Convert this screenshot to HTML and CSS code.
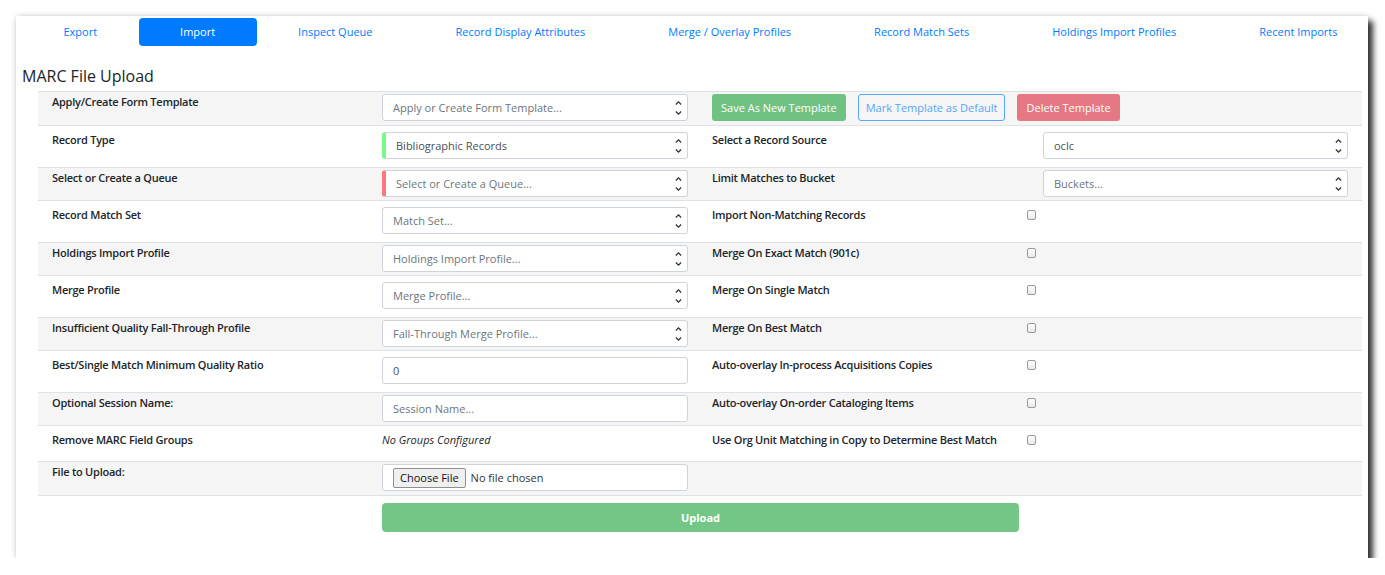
FILE: index.html
```html
<!DOCTYPE html>
<html lang="en">
<head>
  <meta charset="UTF-8">
  <title>MARC File Upload</title>
  <link rel="stylesheet" href="styles.css">
</head>
<body>
  <div class="panel">
    <ul class="tabs">
      <li><a href="#">Export</a></li>
      <li><a href="#" class="active">Import</a></li>
      <li><a href="#">Inspect Queue</a></li>
      <li><a href="#">Record Display Attributes</a></li>
      <li><a href="#">Merge / Overlay Profiles</a></li>
      <li><a href="#">Record Match Sets</a></li>
      <li><a href="#">Holdings Import Profiles</a></li>
      <li><a href="#">Recent Imports</a></li>
    </ul>

    <h3 class="title">MARC File Upload</h3>

    <div class="form-table">
      <div class="row shaded first">
        <div class="cell label">Apply/Create Form Template</div>
        <div class="cell"><div class="select placeholder"><span>Apply or Create Form Template...</span><svg class="caret" viewBox="0 0 8 18"><polyline points="1,5 4,2 7,5"/><polyline points="1,13 4,16 7,13"/></svg></div></div>
        <div class="cell span-2 btn-group">
          <button class="btn btn-success">Save As New Template</button>
          <button class="btn btn-outline">Mark Template as Default</button>
          <button class="btn btn-danger">Delete Template</button>
        </div>
      </div>

      <div class="row">
        <div class="cell label">Record Type</div>
        <div class="cell"><div class="select valid"><span>Bibliographic Records</span><svg class="caret" viewBox="0 0 8 18"><polyline points="1,5 4,2 7,5"/><polyline points="1,13 4,16 7,13"/></svg></div></div>
        <div class="cell label">Select a Record Source</div>
        <div class="cell right"><div class="select"><span>oclc</span><svg class="caret" viewBox="0 0 8 18"><polyline points="1,5 4,2 7,5"/><polyline points="1,13 4,16 7,13"/></svg></div></div>
      </div>

      <div class="row shaded">
        <div class="cell label">Select or Create a Queue</div>
        <div class="cell"><div class="select placeholder invalid"><span>Select or Create a Queue...</span><svg class="caret" viewBox="0 0 8 18"><polyline points="1,5 4,2 7,5"/><polyline points="1,13 4,16 7,13"/></svg></div></div>
        <div class="cell label">Limit Matches to Bucket</div>
        <div class="cell right"><div class="select placeholder"><span>Buckets...</span><svg class="caret" viewBox="0 0 8 18"><polyline points="1,5 4,2 7,5"/><polyline points="1,13 4,16 7,13"/></svg></div></div>
      </div>

      <div class="row">
        <div class="cell label">Record Match Set</div>
        <div class="cell"><div class="select placeholder"><span>Match Set...</span><svg class="caret" viewBox="0 0 8 18"><polyline points="1,5 4,2 7,5"/><polyline points="1,13 4,16 7,13"/></svg></div></div>
        <div class="cell label">Import Non-Matching Records</div>
        <div class="cell right"><span class="checkbox"></span></div>
      </div>

      <div class="row shaded">
        <div class="cell label">Holdings Import Profile</div>
        <div class="cell"><div class="select placeholder"><span>Holdings Import Profile...</span><svg class="caret" viewBox="0 0 8 18"><polyline points="1,5 4,2 7,5"/><polyline points="1,13 4,16 7,13"/></svg></div></div>
        <div class="cell label">Merge On Exact Match (901c)</div>
        <div class="cell right"><span class="checkbox"></span></div>
      </div>

      <div class="row">
        <div class="cell label">Merge Profile</div>
        <div class="cell"><div class="select placeholder"><span>Merge Profile...</span><svg class="caret" viewBox="0 0 8 18"><polyline points="1,5 4,2 7,5"/><polyline points="1,13 4,16 7,13"/></svg></div></div>
        <div class="cell label">Merge On Single Match</div>
        <div class="cell right"><span class="checkbox"></span></div>
      </div>

      <div class="row shaded">
        <div class="cell label">Insufficient Quality Fall-Through Profile</div>
        <div class="cell"><div class="select placeholder"><span>Fall-Through Merge Profile...</span><svg class="caret" viewBox="0 0 8 18"><polyline points="1,5 4,2 7,5"/><polyline points="1,13 4,16 7,13"/></svg></div></div>
        <div class="cell label">Merge On Best Match</div>
        <div class="cell right"><span class="checkbox"></span></div>
      </div>

      <div class="row">
        <div class="cell label">Best/Single Match Minimum Quality Ratio</div>
        <div class="cell"><div class="input">0</div></div>
        <div class="cell label">Auto-overlay In-process Acquisitions Copies</div>
        <div class="cell right"><span class="checkbox"></span></div>
      </div>

      <div class="row shaded">
        <div class="cell label">Optional Session Name:</div>
        <div class="cell"><div class="input placeholder">Session Name...</div></div>
        <div class="cell label">Auto-overlay On-order Cataloging Items</div>
        <div class="cell right"><span class="checkbox"></span></div>
      </div>

      <div class="row">
        <div class="cell label">Remove MARC Field Groups</div>
        <div class="cell note">No Groups Configured</div>
        <div class="cell label">Use Org Unit Matching in Copy to Determine Best Match</div>
        <div class="cell right"><span class="checkbox"></span></div>
      </div>

      <div class="row shaded last">
        <div class="cell label">File to Upload:</div>
        <div class="cell"><div class="input file"><span class="file-btn">Choose File</span>No file chosen</div></div>
      </div>

      <div class="upload-row">
        <button class="btn btn-upload">Upload</button>
      </div>
    </div>
  </div>
</body>
</html>
```

FILE: styles.css
```css
body {
  margin: 0;
  background-color: #ffffff;
  font-family: "Open Sans", Arial, sans-serif;
  font-size: 11px;
  color: #212529;
}

.panel {
  margin: 16px 0 0 16px;
  width: 1352px;
  height: 542px;
  box-sizing: border-box;
  padding: 2px 6px 0 6px;
  background-color: #ffffff;
  box-shadow: 5px 5px 6px rgba(0, 0, 0, 0.8), 0 0 6px rgba(0, 0, 0, 0.18);
}

.tabs {
  display: flex;
  list-style: none;
  margin: 0;
  padding: 0;
  width: 1357px;
}

.tabs li {
  flex: 1 1 auto;
  text-align: center;
}

.tabs a {
  display: block;
  height: 28px;
  line-height: 28px;
  color: #007bff;
  text-decoration: none;
  border-radius: 4px;
}

.tabs a.active {
  background-color: #007bff;
  color: #ffffff;
}

/* page heading */
.title {
  margin: 20px 0 0 0;
  font-size: 16px;
  font-weight: 500;
  line-height: 20px;
  color: #212529;
}

.form-table {
  margin: 5px 0 0 16px;
  width: 1324px;
}

.row {
  display: grid;
  grid-template-columns: 331px 331px 331px 331px;
  border-top: 1px solid #dee2e6;
  padding: 6px 0 8px;
}

.row.shaded {
  background-color: #f5f5f5;
  padding: 2px 0 3px;
}

.row.first,
.row.last {
  padding-bottom: 4px;
}

.row.last {
  border-bottom: 1px solid #dee2e6;
}

.cell {
  box-sizing: border-box;
  min-height: 21px;
  padding: 0 12px 0 12px;
}

.cell:nth-child(1) {
  padding-left: 14px;
}

.cell:nth-child(2) {
  padding-left: 13px;
}

.cell.right {
  padding-right: 14px;
}

.span-2 {
  grid-column: span 2;
}

.label {
  font-weight: 600;
  letter-spacing: -0.25px;
  line-height: 16px;
  white-space: nowrap;
}

.note {
  font-style: italic;
  line-height: 16px;
}

.select,
.input {
  display: flex;
  align-items: center;
  box-sizing: border-box;
  height: 27px;
  padding: 0 5px 0 10px;
  border: 1px solid #ced4da;
  border-radius: 3px;
  background-color: #ffffff;
  color: #495057;
}

.select span {
  flex: 1;
}

.placeholder {
  color: #6c757d;
}

.valid {
  border-left: 4px solid #78fa89;
  padding-left: 10px;
}

.invalid {
  border-left: 4px solid #fa787e;
  padding-left: 10px;
}

/* stacked up/down chevrons of the select */
.caret {
  width: 7px;
  height: 18px;
  fill: none;
  stroke: #333;
  stroke-width: 1.5;
}

.checkbox {
  display: inline-block;
  box-sizing: border-box;
  width: 9px;
  height: 10px;
  margin: 3px 0 0 -16px;
  border: 1px solid #9a9a9a;
  border-radius: 2px;
  background: linear-gradient(#fdfdfd, #e9e9e9);
}

.file {
  padding-left: 10px;
  color: #333;
}

.file-btn {
  display: inline-block;
  height: 20px;
  line-height: 18px;
  box-sizing: border-box;
  padding: 0 6px;
  margin-right: 5px;
  border: 1px solid #8f8f8f;
  border-radius: 2px;
  background-color: #efefef;
  color: #111;
}

.btn-group {
  display: flex;
  gap: 12px;
}

.btn {
  height: 27px;
  padding: 0 8px;
  font-family: "Open Sans", Arial, sans-serif;
  font-size: 11px;
  border: 1px solid transparent;
  border-radius: 3px;
  color: #ffffff;
}

.btn-success {
  background-color: #70c283;
}

.btn-outline {
  background-color: transparent;
  border-color: #56a6fb;
  color: #56a6fb;
  padding: 0 7px;
}

.btn-danger {
  background-color: #e57883;
}

.upload-row {
  padding: 7px 0 0 344px;
}

.btn-upload {
  width: 637px;
  height: 29px;
  background-color: #73c686;
  font-weight: 700;
  border-radius: 4px;
}
```
